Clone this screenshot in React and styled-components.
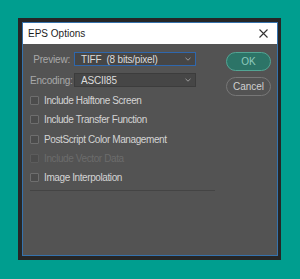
import React from "react";
import styled, { createGlobalStyle } from "styled-components";

const GlobalStyle = createGlobalStyle`
  html, body {
    margin: 0;
    padding: 0;
    background: #009e8f;
    font-family: "Liberation Sans", Arial, sans-serif;
  }
`;

const Page = styled.div`
  width: 300px;
  height: 279px;
  padding: 18px 0 0 18px;
  box-sizing: border-box;
`;

const Frame = styled.div`
  width: 263px;
  height: 242px;
  box-sizing: border-box;
  padding: 4px 3px 4px 4px;
  background: #262626;
`;

const Dialog = styled.div`
  height: 100%;
  box-sizing: border-box;
  border: 1px solid #3572ad;
  display: flex;
  flex-direction: column;
  background: #535353;
`;

const TitleBar = styled.div`
  height: 21px;
  flex: none;
  background: #ffffff;
  display: flex;
  align-items: center;
  justify-content: space-between;
  padding: 0 9px 0 5px;
  font-size: 10px;
  color: #1e1e1e;
`;

const Body = styled.div`
  flex: 1;
  display: flex;
  justify-content: space-between;
  padding: 8px 6px 0 7px;
`;

const Left = styled.div`
  display: flex;
  flex-direction: column;
  width: 185px;
  flex: none;
`;

const Field = styled.div`
  display: grid;
  grid-template-columns: 40px 122px;
  column-gap: 4px;
  align-items: center;
  height: 14px;
  & + & {
    margin-top: 7px;
  }
`;

const Label = styled.span`
  text-align: right;
  font-size: 10px;
  letter-spacing: -0.2px;
  color: #a9a9a9;
  white-space: nowrap;
`;

const Select = styled.div`
  height: 14px;
  box-sizing: border-box;
  border: 1px solid ${(p) => (p.$focused ? "#2f67ad" : "#3c3c3c")};
  background: #464646;
  display: flex;
  align-items: center;
  justify-content: space-between;
  padding: 0 4px 0 6px;
  font-size: 10px;
  letter-spacing: -0.2px;
  color: #dcdcdc;
  white-space: pre;
`;

const Checks = styled.div`
  display: flex;
  flex-direction: column;
  margin-top: 4px;
`;

const CheckRow = styled.label`
  height: 19.3px;
  display: flex;
  align-items: center;
  gap: 5px;
  font-size: 10px;
  letter-spacing: -0.4px;
  color: ${(p) => (p.$disabled ? "#6c6c6c" : "#d4d4d4")};
  white-space: nowrap;
`;

const Box = styled.span`
  width: 9px;
  height: 9px;
  box-sizing: border-box;
  border: 1px solid ${(p) => (p.$disabled ? "#5c5c5c" : "#6e6e6e")};
  border-radius: 1px;
  background: #4c4c4c;
  flex: none;
`;

const Separator = styled.div`
  height: 1px;
  background: #444444;
  margin-top: 3px;
`;

const Buttons = styled.div`
  display: flex;
  flex-direction: column;
  gap: 6px;
  width: 45px;
  flex: none;
`;

const Button = styled.div`
  height: 19px;
  box-sizing: border-box;
  border-radius: 10px;
  display: flex;
  align-items: center;
  justify-content: center;
  font-size: 10px;
  border: 1px solid ${(p) => (p.$primary ? "#52a594" : "#777777")};
  background: ${(p) => (p.$primary ? "#2c7467" : "transparent")};
  color: ${(p) => (p.$primary ? "#8fcabd" : "#d0d0d0")};
`;

const Chevron = () => (
  <svg width="6" height="4" viewBox="0 0 6 4">
    <path d="M0.5 0.8 L3 3.2 L5.5 0.8" fill="none" stroke="#9a9a9a" strokeWidth="1" />
  </svg>
);

const Close = () => (
  <svg width="9" height="9" viewBox="0 0 9 9">
    <path d="M0.5 0.5 L8.5 8.5 M8.5 0.5 L0.5 8.5" stroke="#333" strokeWidth="1.1" />
  </svg>
);

const options = [
  { text: "Include Halftone Screen" },
  { text: "Include Transfer Function" },
  { text: "PostScript Color Management" },
  { text: "Include Vector Data", disabled: true },
  { text: "Image Interpolation" },
];

const App = () => {
  return (
    <>
      <GlobalStyle />
      <Page>
        <Frame>
          <Dialog>
            <TitleBar>
              <span>EPS Options</span>
              <Close />
            </TitleBar>
            <Body>
              <Left>
                <Field>
                  <Label>Preview:</Label>
                  <Select $focused>
                    <span>TIFF  (8 bits/pixel)</span>
                    <Chevron />
                  </Select>
                </Field>
                <Field>
                  <Label>Encoding:</Label>
                  <Select>
                    <span>ASCII85</span>
                    <Chevron />
                  </Select>
                </Field>
                <Checks>
                  {options.map((o) => (
                    <CheckRow key={o.text} $disabled={o.disabled}>
                      <Box $disabled={o.disabled} />
                      {o.text}
                    </CheckRow>
                  ))}
                </Checks>
                <Separator />
              </Left>
              <Buttons>
                <Button $primary>OK</Button>
                <Button>Cancel</Button>
              </Buttons>
            </Body>
          </Dialog>
        </Frame>
      </Page>
    </>
  );
};

export default App;
